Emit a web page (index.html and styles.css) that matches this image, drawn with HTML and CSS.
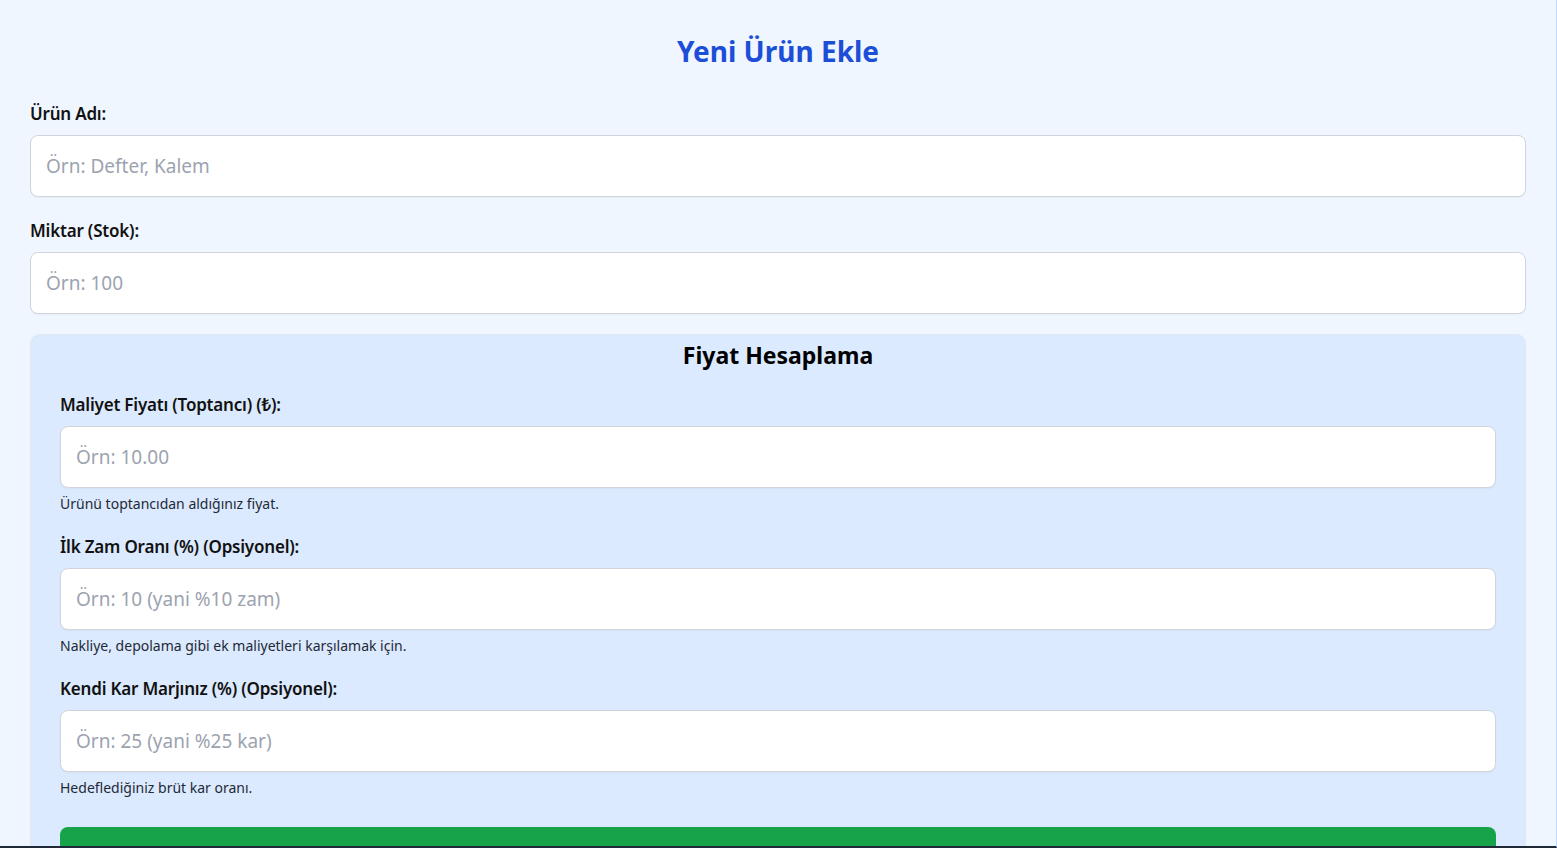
FILE: index.html
```html
<!DOCTYPE html>
<html lang="tr">
<head>
<meta charset="utf-8">
<title>Yeni Ürün Ekle</title>
<link rel="stylesheet" href="styles.css">
</head>
<body>
<div class="page">
  <h1 class="title">Yeni Ürün Ekle</h1>
  <div class="group">
    <label class="label" for="ad">Ürün Adı:</label>
    <input class="input" id="ad" type="text" placeholder="Örn: Defter, Kalem">
  </div>
  <div class="group">
    <label class="label" for="miktar">Miktar (Stok):</label>
    <input class="input" id="miktar" type="text" placeholder="Örn: 100">
  </div>
  <section class="pricing">
    <h2 class="pricing-title">Fiyat Hesaplama</h2>
    <div class="group">
      <label class="label" for="maliyet">Maliyet Fiyatı (Toptancı) (₺):</label>
      <input class="input" id="maliyet" type="text" placeholder="Örn: 10.00">
      <p class="hint">Ürünü toptancıdan aldığınız fiyat.</p>
    </div>
    <div class="group">
      <label class="label" for="zam">İlk Zam Oranı (%) (Opsiyonel):</label>
      <input class="input" id="zam" type="text" placeholder="Örn: 10 (yani %10 zam)">
      <p class="hint">Nakliye, depolama gibi ek maliyetleri karşılamak için.</p>
    </div>
    <div class="group last">
      <label class="label" for="kar">Kendi Kar Marjınız (%) (Opsiyonel):</label>
      <input class="input" id="kar" type="text" placeholder="Örn: 25 (yani %25 kar)">
      <p class="hint">Hedeflediğiniz brüt kar oranı.</p>
    </div>
    <button class="btn" type="button">Fiyatı Hesapla</button>
  </section>
</div>
</body>
</html>
```

FILE: styles.css
```css
* { box-sizing: border-box; }
html, body { margin: 0; padding: 0; }
body {
  background: #eff6ff;
  font-family: "Noto Sans", "Open Sans", sans-serif;
  color: #111827;
  height: 848px;
  overflow: hidden;
}
body::after {
  content: "";
  position: fixed;
  inset: 0;
  border-right: 1px solid #bfdbfe;
  border-bottom: 2px solid #1f2937;
  pointer-events: none;
}
.page {
  padding: 30px 31px 0 30px;
}
.title {
  margin: 0 0 31px;
  text-align: center;
  font-size: 28px;
  line-height: 42px;
  font-weight: 700;
  color: #1d4ed8;
}
.group {
  display: flex;
  flex-direction: column;
  margin-bottom: 23px;
}
.label {
  font-size: 17px;
  line-height: 20px;
  font-weight: 600;
  letter-spacing: -0.2px;
  color: #111;
  padding-top: 1px;
  margin-bottom: 11px;
}
.input {
  height: 62px;
  border: 1px solid #d1d5db;
  border-radius: 8px;
  background: #fff;
  padding: 0 15px;
  font-family: inherit;
  font-size: 19px;
  color: #111;
  box-shadow: 0 1px 2px rgba(0,0,0,0.04);
}
.input::placeholder { color: #9ca3af; }
.pricing {
  margin-top: -3px;
  background: #dbeafe;
  border-radius: 10px;
  box-shadow: 0 0 0 1px #e2e8f0 inset;
  padding: 6px 30px 30px;
}
.pricing-title {
  margin: 0 0 24px;
  text-align: center;
  font-size: 23px;
  line-height: 30px;
  font-weight: 700;
  color: #000;
}
.pricing .group { margin-bottom: 23px; }
.pricing .group.last { margin-bottom: 30px; }
.hint {
  margin: 7px 0 0;
  font-size: 14px;
  line-height: 18px;
  color: #1f2937;
}
.btn {
  width: 100%;
  height: 56px;
  border: none;
  border-radius: 8px;
  background: #16a34a;
  color: #fff;
  font-family: inherit;
  font-size: 18px;
  font-weight: 700;
}
```
